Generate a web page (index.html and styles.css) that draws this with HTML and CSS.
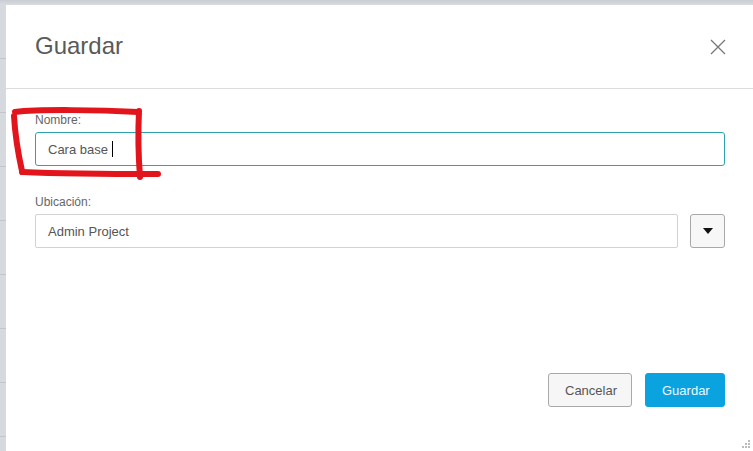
FILE: index.html
```html
<!DOCTYPE html>
<html lang="es">
<head>
<meta charset="utf-8">
<title>Guardar</title>
<link rel="stylesheet" href="styles.css">
</head>
<body>
<div class="app-top"></div>
<div class="app-row">
  <div class="app-left"></div>
  <div class="modal">
    <div class="modal-header">
      <h1 class="modal-title">Guardar</h1>
      <button class="modal-close" aria-label="Cerrar">
        <svg width="16" height="16" viewBox="0 0 16 16"><path d="M1 1L15 15M15 1L1 15" stroke="#777" stroke-width="1.3" fill="none"/></svg>
      </button>
    </div>
    <div class="modal-body">
      <div class="field">
        <label class="field-label">Nombre:</label>
        <div class="input input-focus"><span>Cara base</span><span class="caret"></span></div>
      </div>
      <div class="field">
        <label class="field-label">Ubicación:</label>
        <div class="select-row">
          <div class="input">Admin Project</div>
          <button class="dd-btn" aria-label="Desplegar">
            <svg width="10" height="6" viewBox="0 0 10 6"><path d="M0 0H10L5 6Z" fill="#111"/></svg>
          </button>
        </div>
      </div>
    </div>
    <div class="modal-footer">
      <button class="btn btn-default">Cancelar</button>
      <button class="btn btn-primary">Guardar</button>
    </div>
    <svg class="grip" width="8" height="8" viewBox="0 0 8 8"><g fill="#bbb"><rect x="6" y="0" width="2" height="2"/><rect x="3" y="3" width="2" height="2"/><rect x="6" y="3" width="2" height="2"/><rect x="0" y="6" width="2" height="2"/><rect x="3" y="6" width="2" height="2"/><rect x="6" y="6" width="2" height="2"/></g></svg>
  </div>
</div>
<svg class="annotation" width="170" height="80" viewBox="0 0 170 80">
  <g fill="none" stroke="#e3151c" stroke-width="6" stroke-linecap="round" stroke-linejoin="round">
    <path d="M5 6 C30 3, 90 4, 128 6"/>
    <path d="M4 10 C5 27, 8 47, 12 65"/>
    <path d="M12 66 C60 68, 110 68, 148 68"/>
    <path d="M129 5 C128 25, 128 45, 130 71"/>
  </g>
</svg>
</body>
</html>
```
FILE: styles.css
```css
* { box-sizing: border-box; }
html, body { margin: 0; padding: 0; }
body {
  width: 753px;
  height: 451px;
  overflow: hidden;
  background: #d6d9de;
  font-family: "Liberation Sans", Arial, sans-serif;
  position: relative;
}
.app-top {
  height: 5px;
  background: linear-gradient(to bottom, #c9ccd1, #d8dbe0);
}
.app-row {
  display: flex;
  height: 446px;
}
.app-left {
  width: 6px;
  flex: none;
  background: repeating-linear-gradient(to bottom, #d6d9de 0, #d6d9de 53px, #c3c7cc 53px, #c3c7cc 54px);
}
.modal {
  flex: 1;
  background: #fff;
  display: flex;
  flex-direction: column;
  position: relative;
}
.modal-header {
  height: 84px;
  border-bottom: 1px solid #dcdcdc;
  display: flex;
  align-items: center;
  justify-content: space-between;
  padding: 0 27px 0 29px;
}
.modal-title {
  margin: 0;
  font-size: 24px;
  font-weight: normal;
  color: #5a5a5a;
  padding-bottom: 2px;
}
.modal-close {
  border: 0;
  background: none;
  padding: 0;
  width: 16px;
  height: 16px;
  display: flex;
}
.modal-body {
  padding: 24px 28px 0 29px;
  display: flex;
  flex-direction: column;
  gap: 29px;
}
.field { display: flex; flex-direction: column; gap: 5px; }
.field-label {
  font-size: 12px;
  color: #666;
  line-height: 14px;
}
.input {
  height: 34px;
  border: 1px solid #d2d2d2;
  border-radius: 2px;
  padding: 0 12px;
  display: flex;
  align-items: center;
  font-size: 13px;
  color: #555;
}
.input-focus { border-color: #2ea3ad; border-radius: 3px; }
.caret {
  display: inline-block;
  width: 1px;
  height: 16px;
  background: #000;
  margin-left: 4px;
}
.select-row { display: flex; gap: 12px; }
.select-row .input { flex: 1; }
.dd-btn {
  width: 35px;
  height: 34px;
  flex: none;
  border: 1px solid #a8a8a8;
  border-radius: 3px;
  background: #f7f7f7;
  display: flex;
  align-items: center;
  justify-content: center;
  padding: 0;
}
.modal-footer {
  margin-top: auto;
  margin-bottom: 44px;
  padding-right: 28px;
  display: flex;
  justify-content: flex-end;
  gap: 13px;
}
.btn {
  height: 34px;
  border-radius: 3px;
  font-family: "Liberation Sans", Arial, sans-serif;
  font-size: 13px;
  padding: 0 16px;
}
.btn-default {
  width: 84px;
  background: #f6f6f6;
  border: 1px solid #a9a9a9;
  color: #555;
}
.btn-primary {
  width: 80px;
  background: #0aa3e0;
  border: 1px solid #0aa3e0;
  color: #eef8ff;
}
.grip {
  position: absolute;
  right: 3px;
  bottom: 3px;
}
.annotation {
  position: absolute;
  left: 10px;
  top: 106px;
}
```
